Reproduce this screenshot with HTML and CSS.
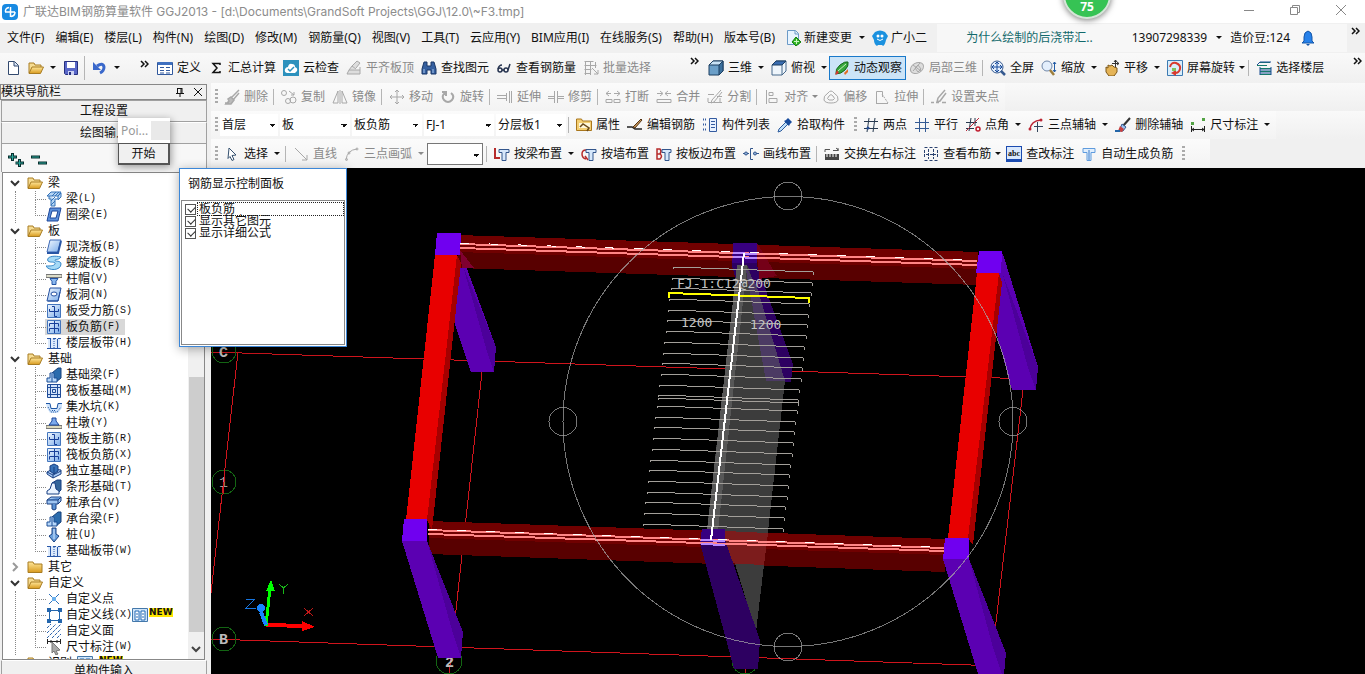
FILE: index.html
```html
<!DOCTYPE html>
<html lang="zh-CN">
<head>
<meta charset="utf-8">
<title>广联达BIM钢筋算量软件 GGJ2013</title>
<link rel="stylesheet" href="styles.css">
</head>
<body>
<svg class="sprite" aria-hidden="true">
  <defs>
    <linearGradient id="gold" x2="0" y2="1"><stop offset="0" stop-color="#ffe79a"/><stop offset="1" stop-color="#d89a1e"/></linearGradient>
    <linearGradient id="sky" x2="1" y2="1"><stop offset="0" stop-color="#f4f9ff"/><stop offset="1" stop-color="#78abea"/></linearGradient>
  </defs>
  <symbol id="open" viewBox="0 0 16 16"><path d="M1 13V3h5l1 2h6v3" fill="#f6dc92" stroke="#a87c22"/><path d="M1 13.500 4 7h11.500l-3 6.500z" fill="url(#gold)" stroke="#a87c22"/></symbol>
  <symbol id="closed" viewBox="0 0 16 16"><path d="M1 13.500V3h5l1 2h8v8.500z" fill="url(#gold)" stroke="#a87c22"/></symbol>
  <symbol id="beam" viewBox="0 0 16 16"><path d="M1 5 5 1h10l-3 4zM3 5v3h2v7h4V8h3V5l3-3v4l-3 3" fill="#b5d5f5" stroke="#3573b8"/><path d="m5 14 4-4m-4 0 4-4m-3-1 4-4m-1 4 4-4" stroke="#3573b8"/></symbol>
  <symbol id="ring" viewBox="0 0 16 16"><path d="M4 1h11l-3 13H1z" fill="#5b8fda" stroke="#1c479b"/><path d="M6 4h6l-2 7H4z" fill="#fff" stroke="#1c479b"/></symbol>
  <symbol id="slab" viewBox="0 0 16 16"><path d="M4 1h11l-3 12H1z" fill="url(#sky)" stroke="#3c68b5"/><path d="M1 14h11l3-12" fill="none" stroke="#2855a4" stroke-width="2"/></symbol>
  <symbol id="spiral" viewBox="0 0 16 16"><path d="M15 2C7 0 0 2 2 6c2 2 8 0 7 3-1 2-5 2-9 2 2 5 15 5 15-2 0-4-7-2-6-4 1-1 4 0 6-3z" fill="#a5daf7" stroke="#3385c7"/></symbol>
  <symbol id="cap" viewBox="0 0 16 16"><path d="M0 3.500h16v3H0z" fill="#dcdcc8" stroke="#777"/><path d="M4 7.500h8l-2 3v3H6v-3z" fill="#8bb8ee" stroke="#2455a5"/></symbol>
  <symbol id="hole" viewBox="0 0 16 16"><path d="M4 1h11l-3 13H1z" fill="url(#sky)" stroke="#2450a0"/><ellipse cx="8" cy="7" rx="3" ry="2" fill="#fff" stroke="#2450a0"/><path d="M2 14h10l2-9" fill="none" stroke="#2450a0"/></symbol>
  <symbol id="force" viewBox="0 0 16 16"><path d="M1.500 1.500h13v13h-13z" fill="url(#sky)" stroke="#4476bd"/><path d="M3.500 6v2.500h9V6M8.500 3.500H6m2.500 0v10H11" fill="none" stroke="#173f99"/></symbol>
  <symbol id="neg" viewBox="0 0 16 16"><path d="M1.500 1.500h13v13h-13z" fill="url(#sky)" stroke="#4476bd"/><path d="M3.500 7.500v-3h9v3M3.500 12.500v-3h9v3M8.500 2v12" fill="none" stroke="#173f99"/></symbol>
  <symbol id="strip" viewBox="0 0 16 16"><path d="M2 3h12v10H2z" fill="#dceafc"/><path d="M1 13.500h14M1 3.500h4m2 0h3m2 0h3M4.500 4v10m7-10v10" stroke="#2957a8"/><path d="M8 4v10" stroke="#2957a8" stroke-dasharray="1 1"/></symbol>
  <symbol id="fbeam" viewBox="0 0 16 16"><path d="m6 6 6-5h3v10l-5 4" fill="#2b6cad" stroke="#153f78"/><path d="M1 15v-4h3V6h4v5h3v4z" fill="#b6d7fa" stroke="#1c4f95"/><path d="M6 7v8" stroke="#1c4f95"/></symbol>
  <symbol id="raft" viewBox="0 0 16 16"><path d="M1.500 1.500h13v13h-13z" fill="#d5e5fb" stroke="#1f4c99"/><path d="M4.500 1v14m7-14v14M1 4.500h14M1 11.500h14M6.500 6.500h3v3h-3z" fill="none" stroke="#1f4c99"/></symbol>
  <symbol id="pit" viewBox="0 0 16 16"><path d="M0 4h4l1 5h6l1-5h4v5l-4 5H4L1 9z" fill="#d0e4fb"/><path d="M0 4.500h4l1 5h6l1-5h4" fill="none" stroke="#1c55a5"/><path d="m2 8 3 5h6l4-5M6 11.500h4" fill="none" stroke="#1c55a5" stroke-dasharray="1 1"/></symbol>
  <symbol id="pier" viewBox="0 0 16 16"><path d="M0 10.500h16v3H0z" fill="#ddd9bd" stroke="#777"/><path d="M6 3h4v3l3 4H3l3-4z" fill="#7ca9ec" stroke="#1b469c"/></symbol>
  <symbol id="iso" viewBox="0 0 16 16"><path d="m1 9 6-3 8 1v4l-8 4-6-4z" fill="#aacbf5" stroke="#173e82"/><path d="M4 3 8 1l4 2v5l-4 3-4-3z" fill="#3973b8" stroke="#173e82"/><path d="m1 9 6 3 8-4M7 12v3M8 4v7" fill="none" stroke="#173e82"/></symbol>
  <symbol id="cone" viewBox="0 0 16 16"><path d="m6 4 5-3h4v10l-4 4" fill="#33659b" stroke="#173e82"/><path d="M1 15v-3l3-2 2-6h3l1 6 3 2v3z" fill="#eaf3ff" stroke="#173e82"/></symbol>
  <symbol id="pcap" viewBox="0 0 16 16"><path d="m1 5 4-3h10v4l-3 3H1z" fill="#9fc5f2" stroke="#173e82"/><path d="M1 5h11l3-3M12 5v4M6 9v5l2 1 2-1V9" fill="#5b92d5" stroke="#173e82"/></symbol>
  <symbol id="pile" viewBox="0 0 16 16"><path d="M6 1h4v6l3 2-5 6-5-6 3-2z" fill="#6aa0dc" stroke="#173e82"/><path d="M8 2v10" stroke="#d7e8ff"/></symbol>
  <symbol id="pt" viewBox="0 0 16 16"><path d="m3 3 10 10M13 3 3 13" stroke="#2c70bb"/><path d="M6 6h4v4H6z" fill="#6ab0ee"/></symbol>
  <symbol id="ln" viewBox="0 0 16 16"><path d="M3.500 3.500h10v10h-10z" fill="#fff" stroke="#2466ad"/><path d="M1 1h4v4H1zm11 0h4v4h-4zM1 12h4v4H1zm11 0h4v4h-4z" fill="#2466ad"/></symbol>
  <symbol id="area" viewBox="0 0 16 16"><path d="m1 5 4-4M1 10l9-9M1 15 15 1M6 15l9-9m-4 9 4-4" stroke="#2c63ad" stroke-dasharray="3 1"/></symbol>
  <symbol id="dim" viewBox="0 0 16 16"><path d="M1.500 0v5M14.500 0v5M1 2.500h14M5 1v3M11 1v3" stroke="#222"/><path d="m6 3 8 8-4 1 2 3-2 1-2-4-2 2z" fill="#aaa" stroke="#777"/></symbol>
  <symbol id="book" viewBox="0 0 16 16"><path d="M.5 1.500h15v13H.5z" fill="#cfe5fa" stroke="#4478aa"/><path d="M3 4h4v9H3zm6 0h4v9H9z" fill="#fff" stroke="#236ab5"/><path d="M4 7h2m-2 3h2m4-3h2m-2 3h2" stroke="#236ab5"/></symbol>
  <symbol id="caret" viewBox="0 0 6 4"><path d="M0 0h6L3 3z" fill="currentColor"/></symbol>
  <symbol id="chevs" viewBox="0 0 9 8"><path d="m1 1 3 3-3 3m4-6 3 3-3 3" fill="none" stroke="#111" stroke-width="1.500"/></symbol>
</svg>

<header class="titlebar">
  <svg class="logo" viewBox="0 0 16 16"><rect width="16" height="16" rx="4" fill="#188ae2"/><path d="M8.500 3v10M3 8h10M7 3.500Q3 4 3.500 8M13 8q0 4-4 4.500" fill="none" stroke="#fff" stroke-width="1.500"/></svg>
  <h1>广联达BIM钢筋算量软件 GGJ2013 - [d:\Documents\GrandSoft Projects\GGJ\12.0\~F3.tmp]</h1>
  <div class="winbtns">
    <button aria-label="最小化"><svg viewBox="0 0 12 12"><path d="M1 6.500h10"/></svg></button>
    <button aria-label="还原"><svg viewBox="0 0 12 12"><path d="M1.500 3.500h7v7h-7zM3.500 3V1.500h7v7H9"/></svg></button>
    <button aria-label="关闭"><svg viewBox="0 0 12 12"><path d="m1 1 10 10M11 1 1 11"/></svg></button>
  </div>
</header>
<div class="score">75</div>

<nav class="menubar">
  <button>文件(F)</button><button>编辑(E)</button><button>楼层(L)</button><button>构件(N)</button><button>绘图(D)</button><button>修改(M)</button><button>钢筋量(Q)</button><button>视图(V)</button><button>工具(T)</button><button>云应用(Y)</button><button>BIM应用(I)</button><button>在线服务(S)</button><button>帮助(H)</button><button>版本号(B)</button>
  <button class="ic"><svg class="i" viewBox="0 0 16 16"><path d="M2.500.5h8l3 3v11h-11z" fill="#e8f4ff" stroke="#6b9ac7"/><path d="M10 1v3h3" fill="none" stroke="#6b9ac7"/><path d="m11 7 5 5-5 4-4-4z" fill="#31b425" stroke="#16800e"/><path d="M11.500 9v5M9 11.500h5" stroke="#c8f5bf"/></svg>新建变更</button><button class="dd" aria-label="更多"><svg><use href="#caret"/></svg></button>
  <button class="ic"><svg class="i" viewBox="0 0 16 16"><path d="M3 2q5-3 10 0l3 4-2 4q-1 5-3 6l-1-1H6l-1 1q-3-2-3-6L0 6z" fill="#1b91df"/><circle cx="6" cy="6" r="1.500" fill="#fff"/><circle cx="10" cy="6" r="1.500" fill="#fff"/><path d="M5 9q3 3 6 0" stroke="#fff" fill="none"/></svg>广小二</button>
  <div class="account">
    <a href="#">为什么绘制的后浇带汇..</a>
    <button>13907298339</button><button class="dd" aria-label="账户"><svg><use href="#caret"/></svg></button>
    <button>造价豆:124</button>
    <button class="ic" aria-label="消息"><svg class="i" viewBox="0 0 16 16"><path d="M8 1Q4 2 4 7v4l-2 2h12l-2-2V7q0-5-4-6z" fill="#2681ea" stroke="#1556a8"/><path d="M6 14h4l-2 2z" fill="#1556a8"/></svg></button>
  </div>
  <button class="more end" aria-label="更多菜单"><svg><use href="#chevs"/></svg></button>
</nav>

<div class="toolbar main">
  <div class="group files">
    <button class="ic" aria-label="新建"><svg class="i" viewBox="0 0 16 16"><path d="M3.500 1.500h6l4 4v9h-10z" fill="#fff" stroke="#32496e"/><path d="M9 2v4h4" fill="#cfe0f5" stroke="#32496e"/></svg></button>
    <button class="ic" aria-label="打开"><svg class="i"><use href="#open"/></svg></button><button class="dd" aria-label="最近"><svg><use href="#caret"/></svg></button>
    <button class="ic" aria-label="保存"><svg class="i" viewBox="0 0 16 16"><path d="M1.500 1.500h13v13h-12l-1-1z" fill="#5967c8" stroke="#27307f"/><path d="M4 2h8v6H4z" fill="#fff"/><path d="M5 11h6v4H5z" fill="#cdd3f3"/><path d="M6 12h2v3H6z" fill="#27307f"/></svg></button>
    <i class="sep tall"></i>
    <button class="ic" aria-label="撤销"><svg class="i" viewBox="0 0 16 16"><path d="M5 6q6-4 7 1 0 4-4 6" fill="none" stroke="#3a68cb" stroke-width="3"/><path d="M1 2v8h8z" fill="#3a68cb"/></svg></button><button class="dd" aria-label="撤销列表"><svg><use href="#caret"/></svg></button>
    <button class="more" aria-label="更多"><svg><use href="#chevs"/></svg></button>
  </div>
  <div class="group calc">
    <button class="ic"><svg class="i" viewBox="0 0 16 16"><path d="M.5 2.500h15v12H.5z" fill="#fff" stroke="#31599d"/><path d="M1 2h14v3H1z" fill="#3f70c0"/><path d="M3 7.500h4m2 0h4M3 10.500h4m2 0h4M3 13h4m2 0h4" stroke="#31599d"/></svg>定义</button>
    <button class="ic"><svg class="i" viewBox="0 0 16 16"><path d="M12 5V3.500H5L9 8l-4 4.500h7V11" fill="none" stroke="#111" stroke-width="1.500"/></svg>汇总计算</button>
    <button class="ic"><svg class="i" viewBox="0 0 16 16"><path d="M0 0h16v16H0z" fill="#2c91bd"/><path d="M4 13q-3-1-2-4 1-2 3-2 1-4 4-3 3 0 3 3 3 1 2 4l-2 2z" fill="#fff"/><path d="m5 9 2 2 4-4" fill="none" stroke="#2c91bd" stroke-width="1.500"/></svg>云检查</button>
    <button class="ic" disabled><svg class="i g" viewBox="0 0 16 16"><path d="m1 14 2-4h11v4zM3 10l3-4 4 3m-4-3 5-5 3 2-4 5m4-1v3" fill="#ddd"/></svg>平齐板顶</button>
    <button class="ic"><svg class="i" viewBox="0 0 16 16"><path d="M3 2h3v4h4V2h3l2 7v5h-5v-4H6v4H1V9z" fill="#345f9f" stroke="#183766"/><path d="M3 9v4m9-4v4" stroke="#abc9ee"/></svg>查找图元</button>
    <button class="ic"><svg class="i" viewBox="0 0 16 16"><g fill="none" stroke="#26334f" stroke-width="1.500"><circle cx="4" cy="10" r="2"/><circle cx="10" cy="10" r="2"/><path d="M2 9q1-4 4-4m0 5h2m4 0 2-6"/></g></svg>查看钢筋量</button>
    <button class="ic" disabled><svg class="i g" viewBox="0 0 16 16"><path d="M1.500 1.500h9m-9 4h12m-12 4h7m-7 4h6M2.500 1v14m5-14v14m5-13v6M9 8l6 6m0-4v4h-4"/></svg>批量选择</button>
  </div>
  <button class="more" aria-label="更多工具"><svg><use href="#chevs"/></svg></button>
  <div class="group view">
    <button class="ic"><svg class="i" viewBox="0 0 16 16"><path d="m1 5 4-4h10v10l-4 4H1z" fill="#6b9fc8" stroke="#1d3f61"/><path d="m1 5 4-4h10l-4 4z" fill="#c8e2f5" stroke="#1d3f61"/><path d="M11 5v10l4-4V1z" fill="#3c719e" stroke="#1d3f61"/></svg>三维</button><button class="dd" aria-label="三维选项"><svg><use href="#caret"/></svg></button>
    <button class="ic"><svg class="i" viewBox="0 0 16 16"><path d="m1 5 4-4h10v10l-4 4H1z" fill="#eef5fb" stroke="#47698b"/><path d="m1 5 4-4h10l-4 4z" fill="#396cb0" stroke="#1d3f61"/><path d="M11 5v10" stroke="#47698b"/></svg>俯视</button><button class="dd" aria-label="视角选项"><svg><use href="#caret"/></svg></button>
    <button class="ic on"><svg class="i" viewBox="0 0 16 16"><path d="M2 14q-1-5 4-9 5-4 8-3 1 4-3 8-4 4-9 4z" fill="#36a83c" stroke="#17681d"/><path d="M4 11 12 4" stroke="#c5f0bc"/><path d="m1 15 4-2-2-3z" fill="#d33"/><path d="m10 13 4-4v3l-3 3z" fill="#e46c25"/></svg>动态观察</button>
    <button class="ic" disabled><svg class="i g" viewBox="0 0 16 16"><ellipse cx="8" cy="8" rx="7" ry="5" transform="rotate(-30 8 8)" fill="#ddd"/><path d="m4 5 8 6M4 11l7-8m-5 5 3-3 3 4-3 3z"/></svg>局部三维</button>
    <i class="sep"></i>
    <button class="ic"><svg class="i" viewBox="0 0 16 16"><circle cx="7" cy="7" r="6" fill="#e4effc" stroke="#35598f"/><path d="m11 11 4 4" stroke="#35598f" stroke-width="2.500"/><path d="M7 2v10M2 7h10M5 4l2-2 2 2M5 10l2 2 2-2M4 5 2 7l2 2m6-4 2 2-2 2" fill="none" stroke="#174b9c"/></svg>全屏</button>
    <button class="ic"><svg class="i" viewBox="0 0 16 16"><circle cx="6" cy="6" r="5" fill="#e4effc" stroke="#7188a9"/><path d="m9 10 4 5" stroke="#9d7e3c" stroke-width="2.500"/><path d="M13.500 2v10M12 4l1.500-2L15 4m-3 6 1.500 2 1.500-2" fill="none" stroke="#225ba5"/></svg>缩放</button><button class="dd" aria-label="缩放选项"><svg><use href="#caret"/></svg></button>
    <button class="ic"><svg class="i" viewBox="0 0 16 16"><path d="m2 7 2 1V5l2 1 2-1 2 2 3 1v4l-3 4H5L2 12z" fill="#e5b457" stroke="#7d5717"/><path d="M11.500 0v7M8 3.500h7M10 2l1.500-2L13 2m0 0 2 1.500L13 5" stroke="#333" fill="none"/></svg>平移</button><button class="dd" aria-label="平移选项"><svg><use href="#caret"/></svg></button>
    <button class="ic"><svg class="i" viewBox="0 0 16 16"><path d="M.5.5h15v15H.5z" fill="#d9edfa" stroke="#3c7ab2"/><path d="M3 7q1-5 6-4 5 2 4 6-1 4-5 4" fill="none" stroke="#d83a2e" stroke-width="2"/><path d="m9 10-5 3 5 3z" fill="#d83a2e"/><path d="M5 8h4v3H5z" fill="#80c25c"/></svg>屏幕旋转</button><button class="dd slim" aria-label="旋转选项"><svg><use href="#caret"/></svg></button>
    <i class="sep"></i>
    <button class="ic"><svg class="i" viewBox="0 0 16 16"><path d="M4 2.500h10M1 5.500h10M4 8.500h11M4 11.500h11M4 14.500h11" stroke="#167a6b"/><path d="m1 5 3-3h11M4 7v8m11-8v8M4 10h11M4 13h11" fill="none" stroke="#1b4e93"/></svg>选择楼层</button>
  </div>
  <button class="more end" aria-label="更多视图"><svg><use href="#chevs"/></svg></button>
</div>

<div class="work">
  <aside class="side">
    <div class="sidehead"><span>模块导航栏</span>
      <button aria-label="固定"><svg viewBox="0 0 10 10"><path d="M2.500 1v5M2 1.500h5M7 1v5M6 1v5M1 6.500h8M5 7v3"/></svg></button>
      <button aria-label="关闭面板"><svg viewBox="0 0 10 10"><path d="m1 1 8 8M9 1 1 9"/></svg></button>
    </div>
    <button class="tab">工程设置</button>
    <button class="tab">绘图输入</button>
    <div class="fold">
      <button aria-label="全部展开"><svg viewBox="0 0 16 16"><path d="M4.500 1v8M0 5h9m2.500 2v8m-4-4H16" stroke="#0a2f2f" stroke-width="3"/><path d="M4.500 2v6M1 5h7m3.500 3v6M8 11h7" stroke="#2aa79a"/></svg></button>
      <button aria-label="全部折叠"><svg viewBox="0 0 16 16"><path d="M0 5h9m-2 6h9" stroke="#0a2f2f" stroke-width="3"/><path d="M1 5h7m0 6h7" stroke="#2aa79a"/></svg></button>
    </div>
    <div class="treebox">
      <ul class="tree">
        <li><div class="node"><svg class="chev" viewBox="0 0 10 10"><path d="m1 3 4 4 4-4"/></svg><svg class="i"><use href="#open"/></svg>梁</div>
          <ul>
            <li><svg class="i"><use href="#beam"/></svg>梁<small>(L)</small></li>
            <li><svg class="i"><use href="#ring"/></svg>圈梁<small>(E)</small></li>
          </ul></li>
        <li><div class="node"><svg class="chev" viewBox="0 0 10 10"><path d="m1 3 4 4 4-4"/></svg><svg class="i"><use href="#open"/></svg>板</div>
          <ul>
            <li><svg class="i"><use href="#slab"/></svg>现浇板<small>(B)</small></li>
            <li><svg class="i"><use href="#spiral"/></svg>螺旋板<small>(B)</small></li>
            <li><svg class="i"><use href="#cap"/></svg>柱帽<small>(V)</small></li>
            <li><svg class="i"><use href="#hole"/></svg>板洞<small>(N)</small></li>
            <li><svg class="i"><use href="#force"/></svg>板受力筋<small>(S)</small></li>
            <li class="sel"><svg class="i"><use href="#neg"/></svg>板负筋<small>(F)</small></li>
            <li><svg class="i"><use href="#strip"/></svg>楼层板带<small>(H)</small></li>
          </ul></li>
        <li><div class="node"><svg class="chev" viewBox="0 0 10 10"><path d="m1 3 4 4 4-4"/></svg><svg class="i"><use href="#open"/></svg>基础</div>
          <ul>
            <li><svg class="i"><use href="#fbeam"/></svg>基础梁<small>(F)</small></li>
            <li><svg class="i"><use href="#raft"/></svg>筏板基础<small>(M)</small></li>
            <li><svg class="i"><use href="#pit"/></svg>集水坑<small>(K)</small></li>
            <li><svg class="i"><use href="#pier"/></svg>柱墩<small>(Y)</small></li>
            <li><svg class="i"><use href="#force"/></svg>筏板主筋<small>(R)</small></li>
            <li><svg class="i"><use href="#neg"/></svg>筏板负筋<small>(X)</small></li>
            <li><svg class="i"><use href="#iso"/></svg>独立基础<small>(P)</small></li>
            <li><svg class="i"><use href="#cone"/></svg>条形基础<small>(T)</small></li>
            <li><svg class="i"><use href="#pcap"/></svg>桩承台<small>(V)</small></li>
            <li><svg class="i"><use href="#fbeam"/></svg>承台梁<small>(F)</small></li>
            <li><svg class="i"><use href="#pile"/></svg>桩<small>(U)</small></li>
            <li><svg class="i"><use href="#strip"/></svg>基础板带<small>(W)</small></li>
          </ul></li>
        <li><div class="node"><svg class="chev dim" viewBox="0 0 10 10"><path d="m3 1 4 4-4 4"/></svg><svg class="i"><use href="#closed"/></svg>其它</div></li>
        <li><div class="node"><svg class="chev" viewBox="0 0 10 10"><path d="m1 3 4 4 4-4"/></svg><svg class="i"><use href="#open"/></svg>自定义</div>
          <ul>
            <li><svg class="i"><use href="#pt"/></svg>自定义点</li>
            <li><svg class="i"><use href="#ln"/></svg>自定义线<small>(X)</small><svg class="i"><use href="#book"/></svg><b class="new">NEW</b></li>
            <li><svg class="i"><use href="#area"/></svg>自定义面</li>
            <li><svg class="i"><use href="#dim"/></svg>尺寸标注<small>(W)</small></li>
          </ul></li>
        <li><div class="node"><svg class="chev" viewBox="0 0 10 10"></svg><svg class="i"><use href="#closed"/></svg><span>识别</span><svg class="i"><use href="#book"/></svg><b class="new">NEW</b></div></li>
      </ul>
      <div class="scroll"><i></i><svg viewBox="0 0 10 10"><path d="m1 3 4 4 4-4"/></svg></div>
    </div>
    <button class="tab last">单构件输入</button>
  </aside>

  <main class="stage">
    <div class="toolbar row"><div class="strip">
      <i class="grip"></i>
      <button class="ic" disabled><svg class="i g" viewBox="0 0 16 16"><path d="m15 1-8 8m8-5-6 7M7 8l3 3-3 4H2l3-3-1-2zM1 14h4" fill="#bbb" stroke-width="1.500"/></svg>删除</button><i class="sep"></i>
      <button class="ic" disabled><svg class="i g" viewBox="0 0 16 16"><circle cx="3" cy="4" r="2.500"/><circle cx="7" cy="12" r="2.500"/><circle cx="12" cy="11" r="3"/><path d="m8 2 5 4m0-3v3h-3"/></svg>复制</button>
      <button class="ic" disabled><svg class="i g" viewBox="0 0 16 16"><path d="M6 2v12H1zM10 2v12h5zM8 1v14"/></svg>镜像</button><i class="sep"></i>
      <button class="ic" disabled><svg class="i g" viewBox="0 0 16 16"><path d="M8 1v14M1 8h14M6 3l2-2 2 2M6 13l2 2 2-2M3 6 1 8l2 2m10-4 2 2-2 2"/></svg>移动</button>
      <button class="ic" disabled><svg class="i g" viewBox="0 0 16 16"><path d="M5 4q-4 3-1 7 4 4 8 0 3-4-1-7M2 3h4v4" stroke-width="2"/></svg>旋转</button><i class="sep"></i>
      <button class="ic" disabled><svg class="i g" viewBox="0 0 16 16"><path d="M0 6.500h9M0 9.500h9M12.500 2v12m2-12v12M9.500 4v8"/></svg>延伸</button>
      <button class="ic" disabled><svg class="i g" viewBox="0 0 16 16"><path d="M0 7.500h6m4 0h6M0 9.500h6m4 0h6M6.500 2v12m3-12v12"/></svg>修剪</button><i class="sep"></i>
      <button class="ic" disabled><svg class="i g" viewBox="0 0 16 16"><path d="M1 4.500h5m3 0h6M4 2 1 4.500 4 7m8-5 3 2.500L12 7M1 10.500h6v3H1zm8 0h6v3H9z"/></svg>打断</button>
      <button class="ic" disabled><svg class="i g" viewBox="0 0 16 16"><path d="M1 4.500h5m3 0h6M4 2l3 2.500L4 7m8-5L9 4.500 12 7M1 10.500h14v3H1z"/></svg>合并</button>
      <button class="ic" disabled><svg class="i g" viewBox="0 0 16 16"><path d="M1 5.500h6m3 2h5M1 13.500h14M14 1 5 11l-1 3 3-1 8-10M1 9v4m12-4v4"/></svg>分割</button><i class="sep"></i>
      <button class="ic" disabled><svg class="i g" viewBox="0 0 16 16"><path d="M2.500 1v14M5 3.500h4v3H5zM5 9.500h8v4H5z"/></svg>对齐</button><button class="dd slim" disabled aria-label="对齐选项"><svg><use href="#caret"/></svg></button>
      <button class="ic" disabled><svg class="i g" viewBox="0 0 16 16"><path d="M5 4q3-4 6 0 5 3 4 7-1 3-7 3t-7-3q-1-4 4-7zM6 7q2-3 4 0 3 3 0 4H6q-3-1 0-4z"/></svg>偏移</button>
      <button class="ic" disabled><svg class="i g" viewBox="0 0 16 16"><path d="M2.500 14V2.500h6V8M2 14.500h12"/><path d="m8 5 6 9" stroke-dasharray="2 1"/></svg>拉伸</button><i class="sep"></i>
      <button class="ic" disabled><svg class="i g" viewBox="0 0 16 16"><path d="M0 13.500h3m2 0h3m3 0h4M14 1 7 9l-1 4 3-1 6-8" stroke-width="1.500"/></svg>设置夹点</button>
    </div></div>

    <div class="toolbar row"><div class="strip">
      <i class="grip"></i>
      <select class="short" aria-label="楼层"><option>首层</option></select>
      <select aria-label="构件大类"><option>板</option></select>
      <select aria-label="构件类型"><option>板负筋</option></select>
      <select aria-label="构件"><option>FJ-1</option></select>
      <select aria-label="分层"><option>分层板1</option></select>
      <i class="sep"></i>
      <button class="ic"><svg class="i" viewBox="0 0 16 16"><path d="M.5 13.500V2h5l1 2h9v9.500z" fill="#f4cf73" stroke="#a9761c"/><path d="M3 6h11v5H3z" fill="#fff8dc"/><path d="m4 10 3-3 6 4-2 3" fill="none" stroke="#6b4a1a" stroke-width="1.500"/></svg>属性</button>
      <button class="ic"><svg class="i" viewBox="0 0 16 16"><path d="M0 10h5l3 2h7" fill="none" stroke="#222" stroke-width="1.500"/><path d="m14 2-8 8 2 1 7-8z" fill="#c49458" stroke="#553514"/></svg>编辑钢筋</button>
      <button class="ic"><svg class="i" viewBox="0 0 16 16"><path d="M1 2.500h3M1 7.500h3M1 12.500h3" stroke="#345ba0" stroke-width="2" stroke-dasharray="1 1"/><path d="M7.500 1.500h7v13h-7z" fill="#e9f2ff" stroke="#345ba0"/><path d="M9 4.500h4m-4 3h4m-4 3h4" stroke="#345ba0"/></svg>构件列表</button>
      <button class="ic"><svg class="i" viewBox="0 0 16 16"><path d="m9 5-7 7-1 3 3-1 7-7" fill="#bfe0fa" stroke="#2f5c9d"/><path d="m7 4 5 5 1-2 2-2-4-4-2 2z" fill="#174b9c"/></svg>拾取构件</button>
      <i class="grip mid"></i>
      <button class="ic"><svg class="i" viewBox="0 0 16 16"><path d="M1 4.500h14M1 11.500h14M6 1 4 15m8-14-2 14" stroke="#26394f"/><circle cx="5" cy="11" r="1.500" fill="#244d96"/></svg>两点</button>
      <button class="ic"><svg class="i" viewBox="0 0 16 16"><path d="M1 5.500h14M1 11.500h14M5.500 1v14m6-14v14" stroke="#345b94"/></svg>平行</button>
      <button class="ic"><svg class="i" viewBox="0 0 16 16"><path d="M1 5.500h11M1 11.500h8M6 1 4 14m6-13v8" stroke="#26394f"/><path d="M1 14 14 1" stroke="#b8283b"/><circle cx="13" cy="12" r="2" fill="none" stroke="#c01b2d" stroke-width="1.500"/></svg>点角</button><button class="dd" aria-label="点角选项"><svg><use href="#caret"/></svg></button>
      <button class="ic"><svg class="i" viewBox="0 0 16 16"><path d="M2 12q1-8 11-9" fill="none" stroke="#bb2634" stroke-width="1.500"/><path d="M6 9.500h9M9.500 5v10" stroke="#33445c"/><circle cx="2" cy="12" r="1.500" fill="#bb2634"/><circle cx="13" cy="3" r="1.500" fill="#bb2634"/></svg>三点辅轴</button><button class="dd" aria-label="辅轴选项"><svg><use href="#caret"/></svg></button>
      <button class="ic"><svg class="i" viewBox="0 0 16 16"><path d="m15 1-7 8" stroke="#333" stroke-width="2"/><path d="m7 7 4 3-3 4H4z" fill="#9bc1ef" stroke="#365b92"/><path d="M5 9 3 14l4 1 2-3z" fill="#c64141"/><path d="M0 14h5" stroke="#2466a8" stroke-width="2"/></svg>删除辅轴</button>
      <button class="ic"><svg class="i" viewBox="0 0 16 16"><path d="M1.500 9v6m13-6v6M2 12.500h12M4 11l-2 1.500L4 14m8-3 2 1.500-2 1.500" fill="none" stroke="#222"/><path d="M1 5h3v3H1zm11-4h3v3h-3z" fill="#53a345"/></svg>尺寸标注</button><button class="dd" aria-label="标注选项"><svg><use href="#caret"/></svg></button>
    </div></div>

    <div class="toolbar row"><div class="strip">
      <i class="grip"></i>
      <button class="ic"><svg class="i" viewBox="0 0 16 16"><path d="m5 2 7 7-4 .5 2 4-2 1-2-4-2 2z" fill="#fff" stroke="#35516f"/></svg>选择</button><button class="dd" aria-label="选择方式"><svg><use href="#caret"/></svg></button><i class="sep"></i>
      <button class="ic" disabled><svg class="i g" viewBox="0 0 16 16"><path d="m2 2 12 12m0-5v5H9"/></svg>直线</button>
      <button class="ic" disabled><svg class="i g" viewBox="0 0 16 16"><path d="M2 14Q3 4 13 3"/><circle cx="2.500" cy="13.500" r="1"/><circle cx="13" cy="3" r="1"/><circle cx="5" cy="7" r="1"/></svg>三点画弧</button><button class="dd" disabled aria-label="画弧选项"><svg><use href="#caret"/></svg></button>
      <select class="boxed" aria-label="半径"><option></option></select><i class="sep"></i>
      <button class="ic"><svg class="i" viewBox="0 0 16 16"><path d="M1 2v10h5" fill="none" stroke="#b62b2b" stroke-width="2"/><path d="M5 3.500h10v3h-3v8H8v-8H5z" fill="#d7e8fb" stroke="#33568c"/></svg>按梁布置</button><button class="dd" aria-label="布置选项"><svg><use href="#caret"/></svg></button>
      <button class="ic"><svg class="i" viewBox="0 0 16 16"><path d="M5 4Q1 4 1 8t4 5m-1-3 3 4" fill="none" stroke="#b62b2b" stroke-width="1.500"/><path d="M5 3.500h10v3h-3v8H8v-8H5z" fill="#d7e8fb" stroke="#33568c"/></svg>按墙布置</button>
      <button class="ic"><svg class="i" viewBox="0 0 16 16"><path d="M1 3v10h3q3-3 0-5 2-3 0-5zm0 5h3" fill="none" stroke="#b62b2b" stroke-width="1.500"/><path d="M6 3.500h9v3h-2v8H9v-8H6z" fill="#d7e8fb" stroke="#33568c"/></svg>按板边布置</button>
      <button class="ic"><svg class="i" viewBox="0 0 16 16"><path d="M0 7.500h6m4 0h6M10 2.500H7.500v11H10" fill="none" stroke="#33568c"/><circle cx="3" cy="7.500" r="1.500" fill="#8caed8" stroke="#33568c"/><circle cx="12" cy="7.500" r="1.500" fill="#8caed8" stroke="#33568c"/></svg>画线布置</button><i class="sep"></i>
      <button class="ic"><svg class="i" viewBox="0 0 16 16"><path d="M1 6V3.500h5m3 1h5V2M12 2l3 2.500" fill="none" stroke="#555"/><path d="M1 8h14v6H1z" fill="#444"/><path d="M3 8v3m3-3v3m3-3v3m3-3v3" stroke="#fff"/></svg>交换左右标注</button>
      <button class="ic"><svg class="i" viewBox="0 0 16 16"><path d="M1.500 1.500h3m2 0h3m2 0h3M1.500 14.500h3m2 0h3m2 0h3M1.500 4v8m4-9v10m5-10v10m4-9v8M3 8.500h10" fill="none" stroke="#2b4270" stroke-dasharray="3 1"/></svg>查看布筋</button><button class="dd slim" aria-label="布筋选项"><svg><use href="#caret"/></svg></button>
      <button class="ic"><svg class="i" viewBox="0 0 16 16"><rect x=".5" y=".5" width="15" height="15" fill="#d9e8fc" stroke="#1b4bb0"/><path d="M1 14h14" stroke="#1b4bb0" stroke-width="2"/><text x="8" y="10" text-anchor="middle" class="abc">abc</text></svg>查改标注</button>
      <button class="ic"><svg class="i" viewBox="0 0 16 16"><path d="M2 2.500h12v4h-4v8H6v-8H2z" fill="#e1effd" stroke="#5f9bdd"/><path d="M8 4v10" stroke="#3578c9"/></svg>自动生成负筋</button>
      <i class="grip mid"></i><span class="stub"></span>
    </div></div>

    <svg class="scene" viewBox="211 168 1154 506" preserveAspectRatio="xMinYMin slice" shape-rendering="crispEdges">
      <g stroke="#d0141c" fill="none">
        <path d="M211 352 1030 379M238 352 211 593M211 639 1000 666M482 372 449 674M1023 390 990 674M745 668v6"/>
      </g>
      <g stroke="#136413" fill="none"><circle cx="224" cy="351" r="12"/><circle cx="224" cy="482" r="12"/><circle cx="224" cy="639" r="12"/><circle cx="449" cy="661" r="13"/><circle cx="745" cy="661" r="13"/><circle cx="992" cy="661" r="13"/></g>
      <g class="axis"><text x="219" y="357">C</text><text x="219" y="487" class="faint">1</text><text x="219" y="644">B</text><text x="445" y="667">2</text></g>
      <path d="m225 470-2 24" stroke="#d0141c"/>
      <path d="M455 258h8L496 347 494 372H471L450 310z" fill="#5b00b2"/><path d="m463 266 33 81-2 25-8-24z" fill="#4c009a"/>
      <path d="m1000 253 3 1 35 113-2 23h-24l-18-66z" fill="#5b00b2"/><path d="m1003 275 35 92-2 23-8-22z" fill="#4c009a"/>
      <path d="m458 235 520 17v33L458 268z" fill="#700000"/><path d="m458 252 520 17v16L458 268z" fill="#580000"/>
      <path d="m460 250 14 18h-12z" fill="#800030"/>
      <path d="M733 243h24v23l36 98-2 18h-25l-34-116z" fill="#2d0061"/><path d="M733 243h24v20h-25z" fill="#380080"/>
      <path d="m757 243 20 33-18 3z" fill="#750018"/>
      <path d="m429 521 516 18v33L429 554z" fill="#700000"/><path d="m429 538 516 17v17L429 554z" fill="#580000"/>
      <path d="m737 265 11 1 37 115-17 150-12 101-31-101-18-2z" fill="#3c3c3c"/>
      <path d="m745 265 12 22 28 94h-19z" fill="#4b3a63"/><path d="M737 265h10l-29 266h-11z" fill="#575757"/>
      <path d="m725 531 43 2-4 32-39-2z" fill="#7c1c1c"/>
      <path d="M435 255h22L427 520H406z" fill="#e80000"/><path d="m457 255 4 8-29 267-5-10z" fill="#a50000"/>
      <path d="M977 273h22L968 538H948z" fill="#e80000"/><path d="m999 273 3 10-29 262-5-7z" fill="#a50000"/>
      <path d="M437 233h24l-1 22h-25zM979 251h23l-1 22h-25z" fill="#7000f0"/>
      <path d="M402 541h25l36 91-2 26h-23z" fill="#5b00b2"/><path d="m427 541 36 91-2 26-9-28z" fill="#4c009a"/><path d="M404 519h23v22h-25z" fill="#7000f0"/>
      <path d="m700 543 25-3 35 100-2 29h-24z" fill="#2d0061"/><path d="M702 529h23v14h-25z" fill="#380080"/>
      <path d="M943 559h26l37 94-2 21h-26z" fill="#5b00b2"/><path d="m969 559 37 94-2 21h-2l-10-30z" fill="#4c009a"/><path d="M945 538h24v21h-26z" fill="#7000f0"/>
      <path d="m460 244 517 17M460 248l517 17M428 530l516 18M428 534l516 17" stroke="#ff8585" stroke-width="2"/>
      <path d="m460 243 517 17M428 529l516 18" stroke="#fff" stroke-dasharray="9 20"/>
      <path d="m733 253 24 1m-24 3 24 1M701 540l24 1m-24 3 24 1" stroke="#b889ff" stroke-width="2"/>
      <path class="bars" d="M673 269v-2l140 5v3M672 280v-2l140 5v3M671 290v-2l140 5v3M669 301v-2l140 5v3M668 312v-2l140 5v3M667 322v-2l140 5v3M666 333v-2l140 5v3M664 344v-2l140 5v3M663 355v-2l140 5v3M662 365v-2l140 5v3M661 376v-2l140 5v3M659 387v-2l140 5v3M658 397v-2l140 5v3M658 400v-2l140 5v3M657 408v-2l140 5v3M655 419v-2l140 5v3M654 429v-2l140 5v3M653 440v-2l140 5v3M652 451v-2l140 5v3M650 462v-2l140 5v3M649 472v-2l140 5v3M648 483v-2l140 5v3M647 494v-2l140 5v3M645 504v-2l140 5v3M644 515v-2l140 5v3M643 526v-2l140 5v3"/>
      <path d="M669 298v-5l140 5v5" fill="none" stroke="#ff0" stroke-width="2"/>
      <path d="M744 253 711 540" stroke="#fff" stroke-width="2"/>
      <g class="dims"><text x="677" y="288">FJ-1:C12@200</text><text x="681" y="327">1200</text><text x="750" y="329">1200</text></g>
      <g fill="none" stroke="#aaa" stroke-opacity=".7"><circle cx="788" cy="421.500" r="225"/><circle cx="788" cy="196" r="14"/><circle cx="563" cy="421.500" r="14"/><circle cx="1013" cy="421.500" r="14"/><circle cx="788" cy="647" r="14"/></g>
      <path d="m266 625 40 1" stroke="red" stroke-width="4"/><path d="m302 621 13 6-13 4z" fill="red"/>
      <path d="m266 626 4-38" stroke="#0f0" stroke-width="3"/><path d="m271 580 4 11h-9z" fill="#0f0"/>
      <path d="m266 625-5-13" stroke="#1685ff" stroke-width="4"/><circle cx="261" cy="608" r="4" fill="#1685ff"/>
      <path d="M245.500 599.500h9l-9 9h10" fill="none" stroke="#1675e0"/><path d="m279 584 4.500 4 4.500-4m-4.500 4v6" fill="none" stroke="#18b818"/><path d="m304 608 9 8m0-8-9 8" stroke="#c01818"/>
    </svg>
  </main>
</div>

<section class="panel">
  <h2>钢筋显示控制面板</h2>
  <div class="checks">
    <label><input type="checkbox" checked><span class="focus">板负筋</span></label>
    <label><input type="checkbox" checked><span>显示其它图元</span></label>
    <label><input type="checkbox" checked><span>显示详细公式</span></label>
  </div>
</section>
<section class="mini"><div><span>Poi...</span><i></i></div><button>开始</button></section>
</body>
</html>
```

FILE: styles.css
```css
* { box-sizing: border-box; }
body {
  margin: 0;
  height: 100vh;
  display: flex;
  flex-direction: column;
  overflow: hidden;
  position: relative;
  background: #f0f0f0;
  color: #111;
  font: 12px/16px "Noto Sans", "Noto Sans CJK SC", sans-serif;
}
button, select, input { font: inherit; color: inherit; margin: 0; }
button { border: 0; padding: 0; background: none; white-space: nowrap; }
ul { list-style: none; margin: 0; padding: 0; }
h1, h2 { margin: 0; font: inherit; }
.sprite { position: absolute; width: 0; height: 0; }
.i { width: 16px; height: 16px; flex: none; fill: none; }
.g { stroke: #a8a8a8; fill: none; }

.titlebar { height: 23px; flex: none; display: flex; align-items: center; background: #fff; padding: 0 18px 0 2px; }
.logo { width: 16px; height: 16px; margin-right: 5px; }
.titlebar h1 { flex: 1; color: #8c8c8c; white-space: nowrap; font-family: Inter, "Noto Sans CJK SC", sans-serif; }
.winbtns { display: flex; gap: 34px; padding-bottom: 3px; }
.winbtns svg { width: 12px; height: 12px; display: block; fill: none; stroke: #888; }
.score {
  position: absolute; right: 254px; top: -29px; width: 48px; height: 48px;
  border-radius: 50%; border: 2px solid #d5e5d8; background: #36c354;
  color: #fff; font-weight: bold; text-align: center; padding-top: 26px;
  box-shadow: 0 1px 6px #777;
}

.menubar { height: 30px; flex: none; display: flex; align-items: center; padding: 0 2px; }
.menubar button { padding: 0 6px 0 5px; }
.menubar .ic { display: flex; align-items: center; gap: 3px; padding: 0 4px; }
.menubar .dd, .toolbar .dd { width: 12px; height: 20px; padding: 0; display: flex; align-items: center; justify-content: center; }
.dd svg { width: 6px; height: 4px; }
.account { display: flex; align-items: center; flex: none; margin-left: auto; height: 28px; background: #f7f7f7; padding-right: 27px; }
.account a { color: #12696b; text-decoration: none; white-space: nowrap; padding: 0 34px 0 29px; }
.more { align-self: flex-start; width: 16px; flex: none; margin-top: 4px; }
.more svg { width: 9px; height: 8px; display: block; margin: 0 auto; }
.menubar .more { padding: 0; }

.toolbar { display: flex; align-items: center; flex: none; background: linear-gradient(#f9f9f9, #f0f0f0); }
.main { height: 30px; }
.group, .strip { display: flex; align-items: center; flex: none; }
.toolbar .ic { display: flex; align-items: center; gap: 4px; padding: 0 3px 0 4px; height: 22px; }
.toolbar button:disabled { color: #8a8a8a; }
.toolbar .dd.slim { width: 8px; }
.files { width: 153px; padding-left: 1px; }
.files .more { margin-left: auto; margin-right: 1px; }
.calc { width: 533px; }
.view { padding-left: 2px; }
.toolbar .on { background: #cce4f7; outline: 1px solid #1979ca; }
.toolbar .end { margin-left: auto; }
.sep { width: 1px; height: 16px; background: #b5b5b5; margin: 0 3px 0 2px; flex: none; }
.tall { height: 24px; }
.row { height: 28px; }
.row:nth-child(3) { height: 29px; background: #f0f0f0; }
.strip { height: 100%; padding: 0 3px; background: linear-gradient(#fbfbfb, #f3f3f3); }
.grip { width: 3px; height: 16px; margin: 0 2px 0 1px; background: repeating-linear-gradient(#aaa 0 2px, transparent 2px 4px); flex: none; }
.grip.mid { margin-left: 6px; }
.stub { width: 20px; }
select {
  appearance: none; width: 70px; height: 22px; margin: 0 0 0 2px; padding: 0 12px 0 2px;
  border: 0; border-radius: 0; outline: 0;
  background: linear-gradient(45deg, transparent 50%, #111 50%) right 6px top 10px / 3px 3px no-repeat,
    linear-gradient(-45deg, transparent 50%, #111 50%) right 3px top 10px / 3px 3px no-repeat, #fff;
}
.row select.short { width: 58px; margin-left: 0; }
.row select.boxed { width: 56px; border: 1px solid #777; margin: 0 1px 0 0; }
.abc { font: bold 8px "Liberation Serif", serif; fill: #111; }

.work { flex: 1; min-height: 0; display: flex; }
.side { width: 207px; flex: none; display: flex; flex-direction: column; min-height: 0; margin-right: 4px; }
.stage { flex: 1; min-width: 0; display: flex; flex-direction: column; }
.scene { flex: 1; min-height: 0; width: 100%; background: #000; display: block; }
.bars { fill: none; stroke: #a39f9a; }
.dims { font: 13px "DejaVu Sans Mono", monospace; fill: #c4c4c4; }
.axis { font: bold 15px "Liberation Mono", monospace; fill: #bbb; }
.faint { font-weight: normal; fill: #999; }

.sidehead { height: 16px; flex: none; display: flex; align-items: center; border: 1px solid #888; margin-top: 1px; padding-right: 3px; gap: 8px; }
.sidehead span { flex: 1; }
.sidehead svg { width: 10px; height: 10px; display: block; fill: none; stroke: #111; }
.tab { height: 22px; flex: none; margin-left: 1px; border: 1px solid #a0a0a0; border-top-color: #fff; text-align: center; }
.sidehead + .tab { border-top-color: #a0a0a0; }
.fold { height: 28px; flex: none; display: flex; align-items: center; gap: 7px; padding: 3px 0 0 6px; border: 1px solid #a0a0a0; border-width: 0 1px; margin-left: 1px; background: #f7f7f7; }
.fold svg { width: 16px; height: 16px; display: block; }
.treebox { flex: 1; min-height: 0; display: flex; margin: 0 2px; border: 1px solid #888; background: #fff; overflow: hidden; }
.tree { flex: 1; padding-top: 2px; min-width: 0; }
.tree .node, .tree ul li { display: flex; align-items: center; height: 16px; white-space: nowrap; position: relative; }
.tree .node { padding-left: 7px; gap: 5px; }
.tree > li { position: relative; }
.tree > li::before { content: ""; position: absolute; left: 12px; top: 16px; bottom: 0; border-left: 1px dotted #888; }
.chev { width: 10px; height: 10px; fill: none; stroke: #333; stroke-width: 2; margin-right: 2px; }
.chev.dim { stroke: #999; stroke-width: 2; }
.tree ul { margin-left: 32px; }
.tree ul li { padding-left: 11px; }
.tree ul li .i:first-child { margin-right: 4px; }
.tree ul li::before { content: ""; position: absolute; left: 0; top: 0; width: 10px; height: 8px; border-left: 1px dotted #888; border-bottom: 1px dotted #888; }
.tree ul li:not(:last-child)::after { content: ""; position: absolute; left: 0; top: 8px; height: 8px; border-left: 1px dotted #888; }
.sel { background: linear-gradient(#d8d8d8, #d8d8d8) 10px 0 / 80px 16px no-repeat; }
small { font: 10px/16px "Liberation Mono", monospace; }
.new { background: #ffe600; font: bold 9px/9px "DejaVu Sans", sans-serif; margin: 0 0 6px 1px; }
.scroll { width: 16px; flex: none; background: #f0f0f0; display: flex; flex-direction: column; align-items: center; padding: 204px 0 5px; }
.scroll i { flex: 1; width: 15px; background: #cdcdcd; margin-bottom: 12px; }
.scroll svg { width: 10px; height: 10px; fill: none; stroke: #444; stroke-width: 2; }
.last { height: 22px; margin-bottom: -8px; }

.panel { position: absolute; left: 179px; top: 168px; width: 168px; height: 179px; border: 1px solid #3c87d8; background: #fff; box-shadow: 0 2px 10px #0005; display: flex; flex-direction: column; }
.panel h2 { padding: 7px 8px 8px; }
.checks { flex: 1; border: 1px solid #888; margin: 0 1px 1px; padding-top: 2px; }
.checks label { display: flex; align-items: center; height: 12px; gap: 2px; padding-left: 3px; }
.checks span { flex: 1; padding-left: 1px; line-height: 12px; }
.checks .focus { outline: 1px dotted #222; margin-right: 1px; }
.checks input { appearance: none; width: 11px; height: 11px; border: 1px solid #555; position: relative; background: #fff; }
.checks input:checked::after { content: ""; position: absolute; left: 2px; top: 1px; width: 6px; height: 4px; border: solid #333; border-width: 0 0 1px 1px; transform: rotate(-45deg); }
.mini { position: absolute; left: 118px; top: 118px; width: 52px; background: #fff; box-shadow: 1px 2px 8px #0006; }
.mini div { height: 25px; display: flex; align-items: center; justify-content: space-between; color: #999; padding-left: 3px; }
.mini i { width: 19px; height: 19px; background: #e9e9e9; }
.mini button { width: 100%; height: 22px; background: #f0f0f0; border: 1px solid #555; border-right-width: 2px; border-bottom-width: 2px; display: block; }
```
